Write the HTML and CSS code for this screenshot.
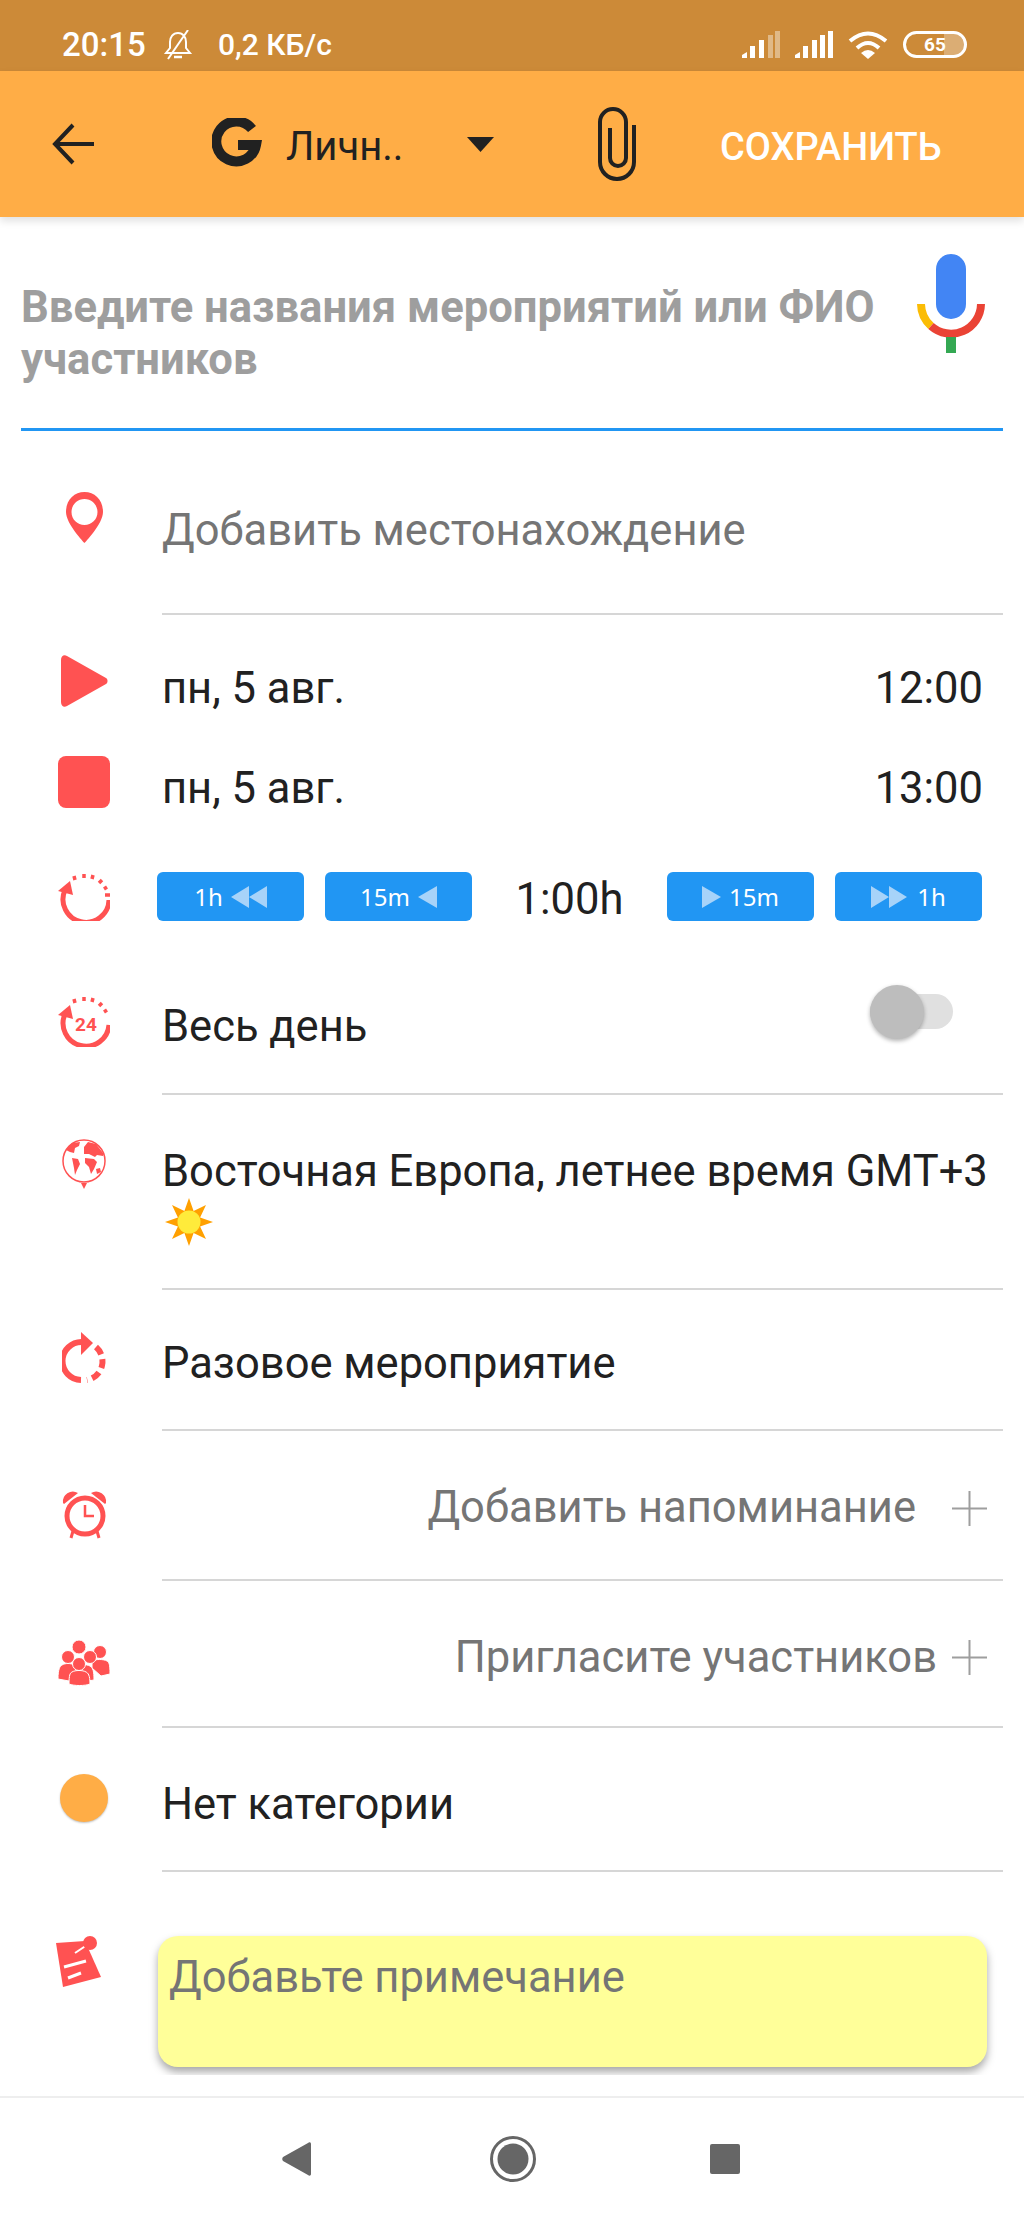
FILE: index.html
```html
<!DOCTYPE html>
<html lang="ru">
<head>
    <meta charset="UTF-8">
    <meta name="viewport" content="width=device-width, initial-scale=1.0">
    <title>Новое мероприятие</title>
    <link rel="stylesheet" href="styles.css">
</head>
<body>
<div class="screen">
    <div class="status-bar">
        <span class="status-time">20:15</span>
        <svg class="status-bell" viewBox="0 0 30 30"><path d="M15 3c-5 0-8 4-8 9v6l-4 5h24l-4-5v-6c0-5-3-9-8-9z" fill="none" stroke="#fff" stroke-width="2"/><path d="M11 27h8" stroke="#fff" stroke-width="2.5"/><path d="M25 0L5 29" stroke="#fff" stroke-width="2"/></svg>
        <span class="status-speed">0,2 КБ/с</span>
        <div class="status-right">
            <svg class="signal" viewBox="0 0 38 27"><g fill="#fff"><path d="M0 27v-3l5-3v6z"/><rect x="8" y="15" width="5" height="12"/><rect x="17" y="9" width="5" height="18"/><rect class="faint" x="26" y="4" width="5" height="23"/><rect class="faint" x="33" y="0" width="5" height="27"/></g></svg>
            <svg class="signal signal-full" viewBox="0 0 38 27"><g fill="#fff"><path d="M0 27v-3l5-3v6z"/><rect x="8" y="15" width="5" height="12"/><rect x="17" y="9" width="5" height="18"/><rect x="25" y="4" width="5" height="23"/><rect x="33" y="0" width="5" height="27"/></g></svg>
            <svg class="wifi" viewBox="0 0 40 28"><g fill="none" stroke="#fff" stroke-width="4"><path d="M2 10Q20-5 38 10"/><path d="M9 17Q20 7 31 17"/></g><path d="M13 22Q20 16 27 22L20 28z" fill="#fff"/></svg>
            <div class="battery"><div class="battery-level"></div><span class="battery-text">65</span></div>
        </div>
    </div>

    <div class="app-bar">
        <svg class="back-arrow" viewBox="0 0 42 42"><path d="M42 21H4M21 2L3 21l18 19" fill="none" stroke="#212121" stroke-width="4"/></svg>
        <svg class="g-logo" viewBox="0 0 50 52"><path d="M40 11A20 20 0 1 0 44 27H26" fill="none" stroke="#212121" stroke-width="10"/></svg>
        <span class="account-name">Личн..</span>
        <svg class="caret" viewBox="0 0 27 15"><path d="M0 0h27L13.500 15z" fill="#212121"/></svg>
        <svg class="clip" viewBox="0 0 40 76"><path d="M37 19V56A17 17 0 0 1 3 56V16A13 13 0 0 1 29 16V52A8 8 0 0 1 13 52V22" fill="none" stroke="#212121" stroke-width="4"/></svg>
        <span class="save">СОХРАНИТЬ</span>
    </div>

    <div class="content">
        <div class="title-box">
            <div class="title-hint">Введите названия мероприятий или ФИО участников</div>
            <svg class="mic" viewBox="0 0 68 99">
                <rect x="19" width="30" height="65" rx="15" fill="#4285F4"/>
                <path d="M4 50A30 30 0 0 0 14 72" fill="none" stroke="#FBBC05" stroke-width="8"/>
                <path d="M14 72A30 30 0 0 0 64 50" fill="none" stroke="#EA4335" stroke-width="8"/>
                <rect x="29" y="83" width="10" height="16" fill="#34A853"/>
            </svg>
        </div>

        <div class="row row-location">
            <div class="icon-col"><svg class="ic-pin" viewBox="0 0 37 51"><path d="M18.500 0C8 0 0 8 0 20c0 12 18.500 31 18.500 31S37 32 37 20C37 8 29 0 18.500 0zm0 7C25.500 7 31.500 12.500 31.500 20S25.500 33 18.500 33 5.500 27.500 5.500 20 11.500 7 18.500 7z" fill="#FF5252" fill-rule="evenodd"/></svg></div>
            <div class="row-body ruled"><span class="muted">Добавить местонахождение</span></div>
        </div>

        <div class="dates">
            <div class="row row-date">
                <div class="icon-col"><svg class="ic-play" viewBox="0 0 47 52"><path d="M0 5C0 1 3-1 6 1L45 23C47 24 47 28 45 29L6 51C3 53 0 51 0 47z" fill="#FF5252"/></svg></div>
                <div class="row-body date-body"><span>пн, 5 авг.</span><span>12:00</span></div>
            </div>
            <div class="row row-date">
                <div class="icon-col"><div class="ic-stop"></div></div>
                <div class="row-body date-body"><span>пн, 5 авг.</span><span>13:00</span></div>
            </div>
        </div>

        <div class="row row-duration">
            <div class="icon-col icon-col-narrow">
                <svg class="ic-timer" viewBox="0 0 52 49"><path d="M51 28A23 23 0 1 1 7 18" fill="none" stroke="#FF5252" stroke-width="5"/><path d="M0 19L12 9l3 14z" fill="#FF5252"/><g stroke="#FF5252" stroke-width="3.500" fill="none"><path d="M17 8l-1-4M26 6V2M34 7l1-4M41 11l3-3M46 17l3-2M47 23h5"/></g></svg>
            </div>
            <div class="step-group">
                <div class="step-btn"><span>1h</span><svg class="tri tri-2" viewBox="0 0 36 22"><path d="M0 11L18 0v22zM18 11L36 0v22z" fill="#A7D3F9"/></svg></div>
                <div class="step-btn"><span>15m</span><svg class="tri" viewBox="0 0 19 22"><path d="M0 11L19 0v22z" fill="#A7D3F9"/></svg></div>
            </div>
            <div class="duration-value">1:00h</div>
            <div class="step-group">
                <div class="step-btn"><svg class="tri" viewBox="0 0 19 22"><path d="M19 11L0 0v22z" fill="#A7D3F9"/></svg><span>15m</span></div>
                <div class="step-btn"><svg class="tri tri-2" viewBox="0 0 36 22"><path d="M18 11L0 0v22zM36 11L18 0v22z" fill="#A7D3F9"/></svg><span class="gap-text">1h</span></div>
            </div>
        </div>

        <div class="row row-allday">
            <div class="icon-col"><svg class="ic-allday" viewBox="0 0 52 52"><path d="M51 30A23 23 0 1 1 7 19" fill="none" stroke="#FF5252" stroke-width="5"/><path d="M0 20L12 10l3 14z" fill="#FF5252"/><g stroke="#FF5252" stroke-width="3.500" fill="none"><path d="M17 8l-1-4M26 6V2M34 7l1-4M41 11l3-3M46 17l3-2"/></g><text x="28" y="36" class="ic-allday-text">24</text></svg></div>
            <div class="row-body ruled allday-body">
                <span>Весь день</span>
                <div class="switch"><div class="switch-thumb"></div></div>
            </div>
        </div>

        <div class="row row-zone">
            <div class="icon-col"><svg class="ic-globe" viewBox="0 0 44 50"><circle cx="22" cy="22" r="21" fill="none" stroke="#FF5252" stroke-width="1.500"/><path d="M22 50l-3-6h6z" fill="#FF5252"/><g fill="#FF5252"><path d="M4 11L10 4l8-1-1 4-4 2-1 5-4-1z"/><path d="M10 19l6 1 2 5-3 6-2 5-1-7z"/><path d="M22 8l4-5 8 2 7 9 0 3-6-1-2 2-6-3-5 0z"/><path d="M23 19l9 1 3 3-3 7-3 5-2-7-4-4z"/><path d="M34 30l4-1 1 4-4 2z"/></g></svg></div>
            <div class="row-body ruled zone-body">
                <div>Восточная Европа, летнее время GMT+3</div>
                <svg class="sun" viewBox="0 0 48 48"><path d="M24 0l4.600 12.900L41 7l-5.900 12.400L48 24l-12.900 4.600L41 41l-12.400-5.900L24 48l-4.600-12.900L7 41l5.900-12.400L0 24l12.900-4.600L7 7l12.400 5.900z" fill="#FFA000"/><circle cx="24" cy="24" r="11.500" fill="#FFEB3B"/></svg>
            </div>
        </div>

        <div class="row row-repeat">
            <div class="icon-col"><svg class="ic-repeat" viewBox="0 0 44 52"><path d="M20 10A19 19 0 0 0 19 48" fill="none" stroke="#FF5252" stroke-width="6"/><path d="M19 0l12 11-12 12z" fill="#FF5252"/><path d="M34 15A19 19 0 0 1 25 48" fill="none" stroke="#FF5252" stroke-width="6" stroke-dasharray="9 5"/></svg></div>
            <div class="row-body ruled"><span>Разовое мероприятие</span></div>
        </div>

        <div class="row row-reminder">
            <div class="icon-col"><svg class="ic-alarm" viewBox="0 0 47 51"><circle cx="24" cy="28" r="18" fill="none" stroke="#FF5252" stroke-width="5"/><path d="M24 17v11h9" fill="none" stroke="#FF5252" stroke-width="2.500"/><path d="M2 15A10 10 0 0 1 17 5L3 16z" fill="#FF5252"/><path d="M45 15A10 10 0 0 0 30 5L44 16z" fill="#FF5252"/><path d="M12 43l-2 7M36 43l2 7" stroke="#FF5252" stroke-width="3"/></svg></div>
            <div class="row-body ruled add-body">
                <span class="muted">Добавить напоминание</span>
                <svg class="plus plus-far" viewBox="0 0 35 35"><path d="M17.500 0v35M0 17.500h35" stroke="#9E9E9E" stroke-width="2"/></svg>
            </div>
        </div>

        <div class="row row-invite">
            <div class="icon-col"><svg class="ic-people" viewBox="0 0 52 46"><g fill="#FF5252" stroke="#fff" stroke-width="1"><circle cx="42" cy="12" r="6.500"/><path d="M34 21c3-2 12-2 15 0 2 1 3 3 3 13l-9 2-9-8z"/><circle cx="21" cy="7" r="7"/><circle cx="10" cy="17" r="6.500"/><circle cx="32" cy="17" r="6.500"/><path d="M0 39c0-10 2-13 4-14 3-2 9-2 12 0l6 14-11 2z"/><path d="M18 26c3-2 10-2 14 0 3 2 4 5 4 14l-13 2z"/><circle cx="21" cy="24" r="6.500"/><path d="M11 44c0-9 1-11 3-12 3-2 11-2 14 0 2 1 4 3 4 12-5 2-16 2-21 0z"/></g></svg></div>
            <div class="row-body ruled add-body">
                <span class="muted">Пригласите участников</span>
                <svg class="plus" viewBox="0 0 35 35"><path d="M17.500 0v35M0 17.500h35" stroke="#9E9E9E" stroke-width="2"/></svg>
            </div>
        </div>

        <div class="row row-category">
            <div class="icon-col"><div class="ic-dot"></div></div>
            <div class="row-body ruled"><span>Нет категории</span></div>
        </div>

        <div class="row row-note">
            <div class="icon-col icon-col-note"><svg class="ic-note" viewBox="0 0 45 51"><path d="M0 7L29 5 45 41 7 51z" fill="#FF5252"/><path d="M34 7L19 17" stroke="#fff" stroke-width="2"/><circle cx="34" cy="7" r="7" fill="#FF5252"/><path d="M8 31l22-6M12 42l13-5" stroke="#fff" stroke-width="3"/></svg></div>
            <div class="note-card">Добавьте примечание</div>
        </div>
    </div>

    <div class="nav-bar">
        <svg class="nav-back" viewBox="0 0 29 34"><path d="M29 2v30c0 2-2 2-3 1L1 19c-1-1-1-3 0-4L26 1c1-1 3-1 3 1z" fill="#666"/></svg>
        <svg class="nav-home" viewBox="0 0 46 46"><circle cx="23" cy="23" r="21.500" fill="none" stroke="#666" stroke-width="3"/><circle cx="23" cy="23" r="15.500" fill="#666"/></svg>
        <div class="nav-recent"></div>
    </div>
</div>
</body>
</html>
```

FILE: styles.css
```css
html, body {
    margin: 0;
    padding: 0;
    background: #fff;
}

.screen {
    width: 1024px;
    height: 2219px;
    display: flex;
    flex-direction: column;
    overflow: hidden;
    font-family: Roboto, "Noto Sans", sans-serif;
    font-size: 43.5px;
    line-height: 52px;
    color: #212121;
}

svg {
    display: block;
    flex-shrink: 0;
}

/* status bar */
.status-bar {
    height: 71px;
    flex-shrink: 0;
    box-sizing: border-box;
    display: flex;
    align-items: center;
    padding: 18px 57px 0 62px;
    background: #CC8A38;
    color: #fff;
    font-size: 33px;
    font-weight: 500;
}
.status-time {
    width: 84px;
}
.status-bell {
    width: 30px;
    height: 30px;
    margin-left: 17px;
}
.status-speed {
    margin-left: 25px;
    font-size: 30px;
}
.status-right {
    display: flex;
    align-items: center;
    margin-left: auto;
}
.signal {
    width: 38px;
    height: 27px;
}
.signal-full {
    margin-left: 15px;
}
.faint {
    opacity: 0.4;
}
.wifi {
    width: 40px;
    height: 28px;
    margin-left: 15px;
}
.battery {
    position: relative;
    width: 64px;
    height: 27px;
    margin-left: 15px;
    box-sizing: border-box;
    border: 3px solid #fff;
    border-radius: 14px;
    overflow: hidden;
    display: flex;
    align-items: center;
    justify-content: center;
}
.battery-level {
    position: absolute;
    top: 0;
    bottom: 0;
    right: 0;
    width: 35%;
    background: rgba(255, 255, 255, 0.3);
}
.battery-text {
    position: relative;
    font-size: 19px;
    line-height: 21px;
    font-weight: 700;
}

/* app bar */
.app-bar {
    height: 146px;
    flex-shrink: 0;
    display: flex;
    align-items: center;
    padding-left: 52px;
    background: #FFAD46;
    box-shadow: 0 4px 8px rgba(0, 0, 0, 0.12);
    position: relative;
}
.back-arrow {
    width: 42px;
    height: 42px;
}
.g-logo {
    width: 50px;
    height: 52px;
    margin-left: 118px;
}
.account-name {
    width: 117px;
    margin-left: 24px;
    padding-top: 5px;
    font-size: 40px;
}
.caret {
    width: 27px;
    height: 15px;
    margin-left: 64px;
}
.clip {
    width: 40px;
    height: 76px;
    margin-left: 103px;
}
.save {
    margin-left: 83px;
    padding-top: 5px;
    color: #fff;
    font-size: 38px;
    font-weight: 500;
}

/* form */
.content {
    height: 1858px;
    flex-shrink: 0;
    overflow: hidden;
}

.title-box {
    height: 214px;
    box-sizing: border-box;
    margin: 0 21px;
    padding-top: 37px;
    display: flex;
    justify-content: space-between;
    border-bottom: 3px solid #2196F3;
}
.title-hint {
    width: 870px;
    margin-top: 28px;
    color: #9E9E9E;
    font-size: 43.6px;
    font-weight: 700;
}
.mic {
    width: 68px;
    height: 99px;
    margin-right: 18px;
}

.row {
    display: flex;
    align-items: flex-start;
}
.icon-col {
    width: 156px;
    padding-left: 6px;
    flex-shrink: 0;
    display: flex;
    justify-content: center;
}
.icon-col-narrow {
    width: 146px;
    padding-left: 11px;
}
.icon-col-note {
    width: 102px;
    padding: 0 0 0 56px;
    justify-content: flex-start;
}
.row-body {
    flex: 1;
    min-width: 0;
    margin-right: 21px;
    box-sizing: border-box;
    display: flex;
    align-items: center;
}
.ruled {
    border-bottom: 2px solid #D6D6D6;
}
.muted {
    color: #757575;
}

.row-location .row-body {
    height: 184px;
    padding-top: 18px;
}
.ic-pin {
    width: 37px;
    height: 51px;
    margin-top: 61px;
}

.dates {
    margin-top: 22px;
}
.row-date .row-body {
    height: 100px;
    padding-top: 3px;
}
.date-body {
    justify-content: space-between;
    padding-right: 20px;
}
.ic-play {
    width: 47px;
    height: 52px;
    margin-top: 18px;
}
.ic-stop {
    width: 52px;
    height: 52px;
    margin-top: 19px;
    background: #FF5252;
    border-radius: 8px;
}

.row-duration {
    margin-top: 35px;
    height: 49px;
    padding-right: 42px;
}
.ic-timer {
    width: 52px;
    height: 49px;
}
.step-group {
    display: flex;
    gap: 21px;
}
.step-btn {
    width: 147px;
    height: 49px;
    display: flex;
    align-items: center;
    justify-content: center;
    gap: 8px;
    background: #2196F3;
    border-radius: 6px;
    color: #fff;
    font-family: "Noto Sans", sans-serif;
    font-size: 24px;
}
.gap-text {
    margin-left: 2px;
}
.tri {
    width: 19px;
    height: 22px;
}
.tri-2 {
    width: 36px;
}
.duration-value {
    flex: 1;
    padding-top: 3px;
    text-align: center;
    line-height: 49px;
}

.row-allday .row-body {
    height: 174px;
    padding-top: 40px;
    justify-content: space-between;
    padding-right: 50px;
}
.ic-allday {
    width: 52px;
    height: 52px;
    margin-top: 74px;
}
.ic-allday-text {
    font-family: Roboto, sans-serif;
    font-size: 19px;
    font-weight: 700;
    fill: #FF5252;
    text-anchor: middle;
}
.switch {
    position: relative;
    width: 83px;
    height: 35px;
    margin-bottom: 32px;
    background: #E0E0E0;
    border-radius: 18px;
}
.switch-thumb {
    position: absolute;
    left: 0;
    top: -9px;
    width: 54px;
    height: 54px;
    background: #BDBDBD;
    border-radius: 50%;
    box-shadow: 0 2px 4px rgba(0, 0, 0, 0.3);
}

.row-zone .row-body {
    height: 195px;
    padding-top: 51px;
    flex-direction: column;
    align-items: flex-start;
}
.ic-globe {
    width: 44px;
    height: 50px;
    margin-top: 44px;
}
.sun {
    width: 48px;
    height: 48px;
    margin-left: 3px;
}

.row-repeat .row-body {
    height: 141px;
    padding-top: 8px;
}
.ic-repeat {
    width: 44px;
    height: 52px;
    margin-top: 42px;
}

.add-body {
    justify-content: flex-end;
    padding-right: 16px;
}
.plus {
    width: 35px;
    height: 35px;
    margin-left: 15px;
}
.plus-far {
    margin-left: 36px;
}
.row-reminder .row-body {
    height: 150px;
    padding-top: 6px;
}
.ic-alarm {
    width: 47px;
    height: 51px;
    margin-top: 57px;
}
.row-invite .row-body {
    height: 147px;
    padding-top: 8px;
}
.ic-people {
    width: 52px;
    height: 46px;
    margin-top: 59px;
}

.row-category .row-body {
    height: 144px;
    padding-top: 12px;
}
.ic-dot {
    width: 48px;
    height: 48px;
    margin-top: 46px;
    background: #FFAD46;
    border-radius: 50%;
    box-shadow: 0 1px 2px rgba(0, 0, 0, 0.25);
}

.row-note {
    padding-top: 64px;
}
.ic-note {
    width: 45px;
    height: 51px;
}
.note-card {
    width: 829px;
    height: 131px;
    box-sizing: border-box;
    padding: 16px 11px;
    background: #FFFF99;
    border-radius: 20px;
    box-shadow: 0 5px 8px rgba(0, 0, 0, 0.35);
    color: #757575;
}

/* navigation bar */
.nav-bar {
    margin-top: 21px;
    flex: 1;
    box-sizing: border-box;
    display: flex;
    align-items: center;
    padding-left: 282px;
    border-top: 2px solid #EEEEEE;
}
.nav-back {
    width: 29px;
    height: 34px;
}
.nav-home {
    width: 46px;
    height: 46px;
    margin-left: 179px;
}
.nav-recent {
    width: 30px;
    height: 30px;
    margin-left: 174px;
    background: #666;
    border-radius: 2px;
}
```
